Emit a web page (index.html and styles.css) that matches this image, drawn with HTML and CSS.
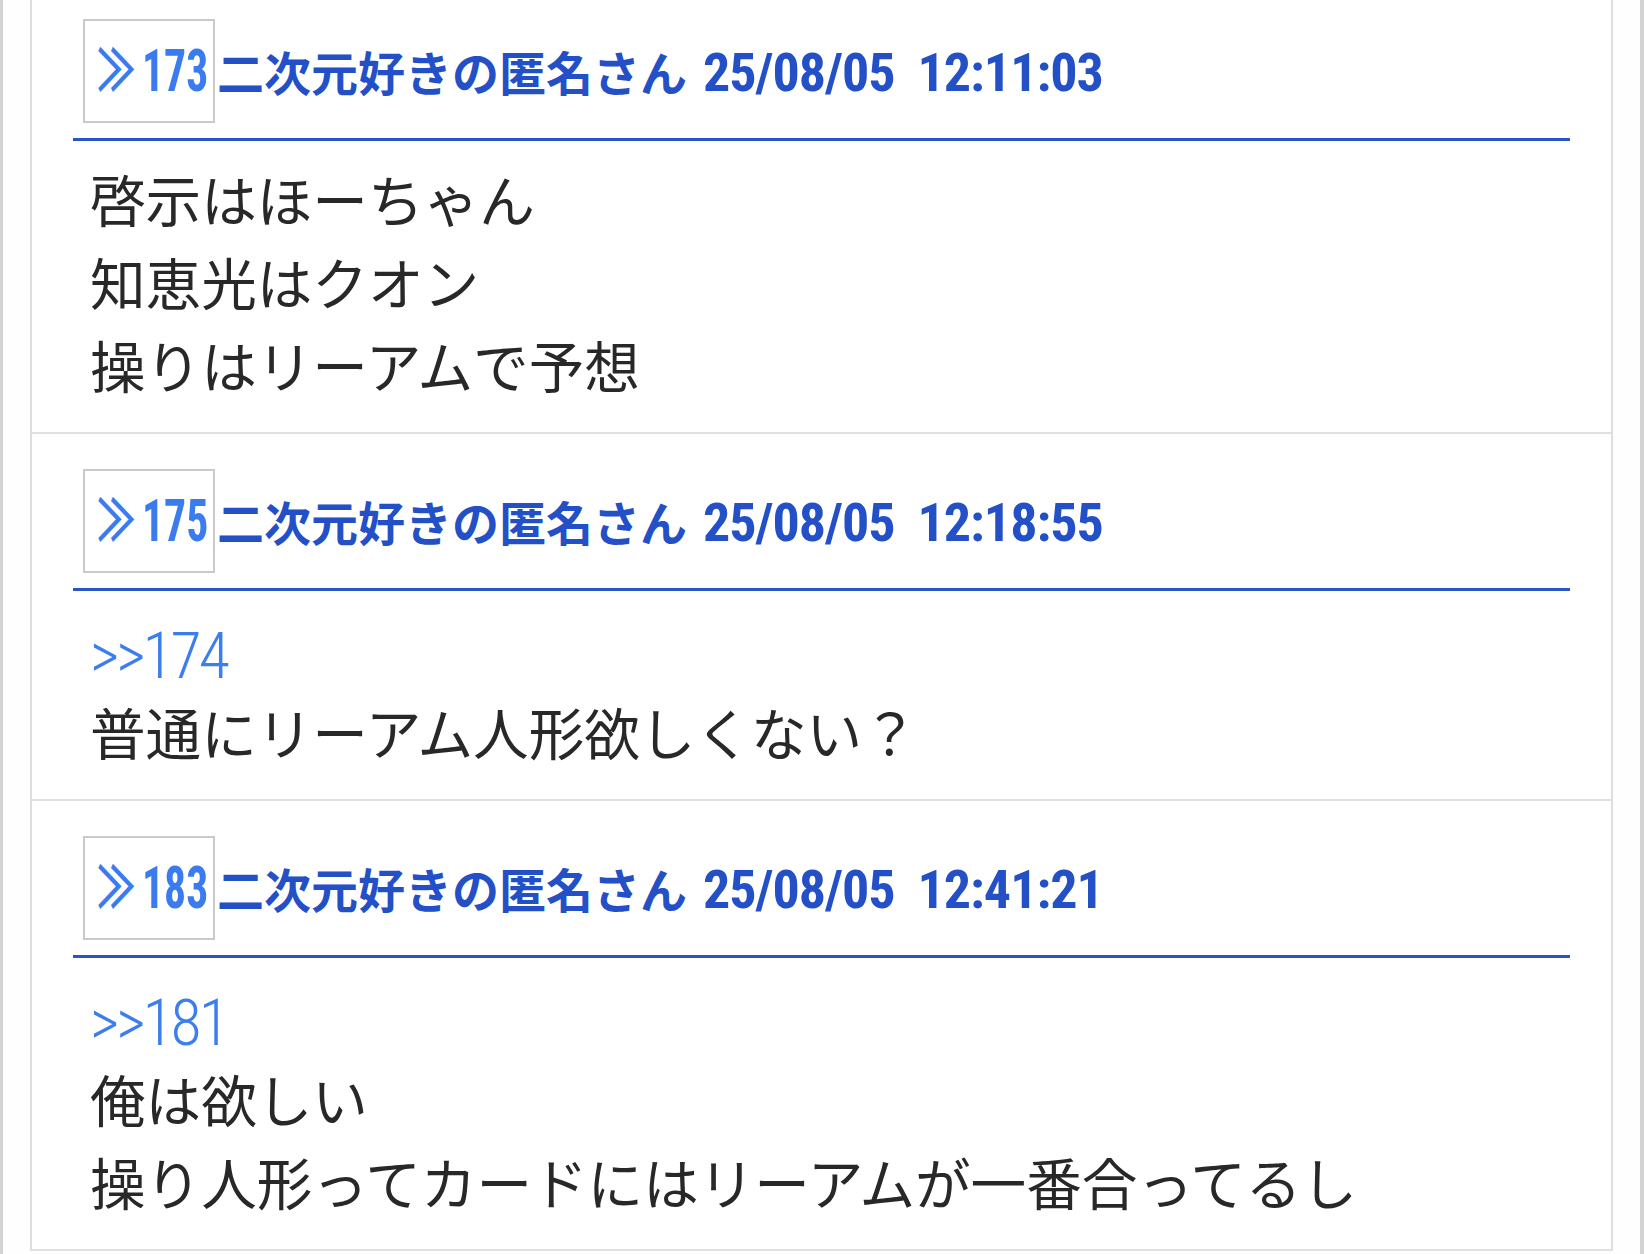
FILE: index.html
```html
<!DOCTYPE html>
<html lang="ja">
<head>
<meta charset="utf-8">
<title>スレッド</title>
<link rel="stylesheet" href="styles.css">
</head>
<body>
<div class="page">
  <div class="thread">
    <article class="post">
      <header class="post-head">
        <span class="res-no"><span class="mark">≫</span><span class="num">173</span></span>
        <span class="name">二次元好きの匿名さん</span>
        <span class="date">25/08/05&nbsp; 12:11:03</span>
      </header>
      <div class="post-body">啓示はほーちゃん<br>知恵光はクオン<br>操りはリーアムで予想</div>
    </article>
    <article class="post">
      <header class="post-head">
        <span class="res-no"><span class="mark">≫</span><span class="num">175</span></span>
        <span class="name">二次元好きの匿名さん</span>
        <span class="date">25/08/05&nbsp; 12:18:55</span>
      </header>
      <div class="post-body"><a class="anchor" href="#">&gt;&gt;174</a><br>普通にリーアム人形欲しくない？</div>
    </article>
    <article class="post">
      <header class="post-head">
        <span class="res-no"><span class="mark">≫</span><span class="num">183</span></span>
        <span class="name">二次元好きの匿名さん</span>
        <span class="date">25/08/05&nbsp; 12:41:21</span>
      </header>
      <div class="post-body"><a class="anchor" href="#">&gt;&gt;181</a><br>俺は欲しい<br>操り人形ってカードにはリーアムが一番合ってるし</div>
    </article>
  </div>
</div>
</body>
</html>
```

FILE: styles.css
```css
body {
  margin: 0;
  background: #ffffff;
  font-family: "Noto Sans CJK JP", "Noto Sans", sans-serif;
}

.page {
  box-sizing: border-box;
  min-height: 100vh;
  padding: 0 27px;
  border-left: 3px solid #d3d3d3;
  border-right: 4px solid #d3d3d3;
  background: #fefefe;
  overflow: hidden;
}

.thread {
  margin-top: -16px;
  border-left: 2px solid #dedede;
  border-right: 2px solid #dedede;
  background: #ffffff;
}

.post {
  padding: 35px 41px 26px;
  border-bottom: 2px solid #e0e0e0;
}

.post-head {
  display: flex;
  align-items: baseline;
  padding-bottom: 15px;
  border-bottom: 3px solid #2b55c6;
  white-space: nowrap;
}

.res-no {
  box-sizing: border-box;
  width: 132px;
  height: 104px;
  margin-left: 10px;
  padding: 0 0 0 12px;
  border: 2px solid #cacaca;
  line-height: 100px;
  color: #3a7bf0;
  font-family: "Liberation Sans Narrow", "Roboto Condensed", "DejaVu Sans Condensed", "Noto Sans", "Noto Sans CJK JP", sans-serif;
  font-stretch: condensed;
  font-size: 59px;
  font-weight: 700;
  overflow: hidden;
}

.res-no .mark {
  display: inline-block;
  width: 45px;
  font-family: "Noto Sans CJK JP", sans-serif;
  font-size: 58px;
  font-weight: 700;
  line-height: 60px;
  transform: scaleX(0.66);
  transform-origin: left center;
}

.res-no .num {
  display: inline-block;
  transform: scaleX(0.74);
  transform-origin: left center;
}

.name {
  margin-left: 2px;
  font-size: 47px;
  font-weight: 700;
  line-height: 60px;
  color: #2350c6;
}

.date {
  margin-left: 16px;
  font-family: "Liberation Sans Narrow", "Roboto Condensed", "DejaVu Sans Condensed", "Noto Sans", sans-serif;
  font-stretch: condensed;
  font-size: 54px;
  font-weight: 700;
  letter-spacing: -1px;
  line-height: 60px;
  color: #2350c6;
}

.post-body {
  padding: 16px 0 0 17px;
  font-size: 55.6px;
  line-height: 83px;
  color: #282828;
}

.anchor {
  font-family: "Liberation Sans Narrow", "Roboto Condensed", "DejaVu Sans Condensed", "Noto Sans", sans-serif;
  font-stretch: condensed;
  font-size: 64px;
  font-weight: 300;
  letter-spacing: -3px;
  line-height: 1;
  vertical-align: -6px;
  color: #3c7eef;
  text-decoration: none;
}
```
